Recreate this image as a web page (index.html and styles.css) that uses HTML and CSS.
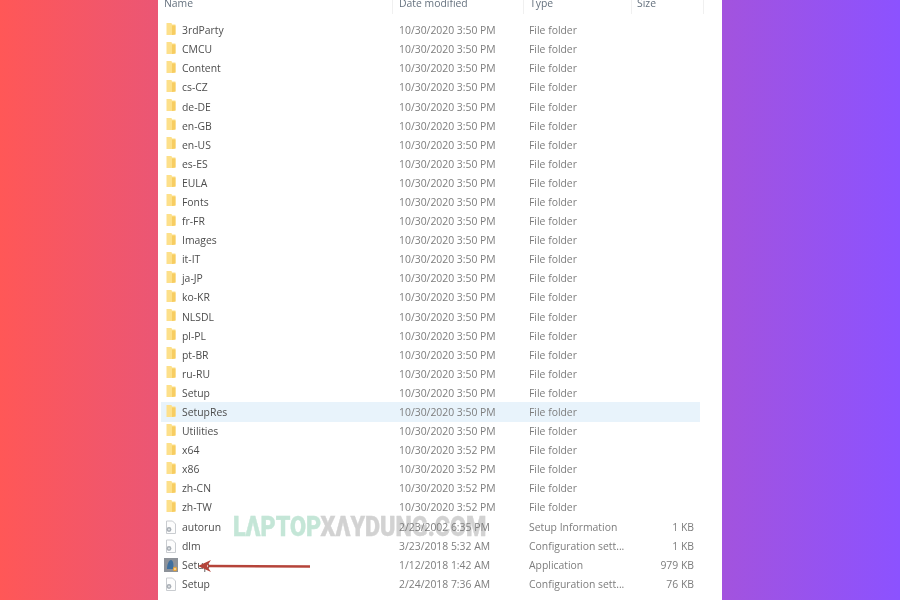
FILE: index.html
```html
<!DOCTYPE html>
<html>
<head>
    <link rel="stylesheet" href="styles.css">
</head>
<body>
    <svg class="defs" width="0" height="0">
        <symbol id="folder" viewBox="0 0 10 14">
            <path d="M.5 1h5l.5 1.500h3.500v10L6 13H.5z" fill="#fde08a"/>
            <path d="M6 3.500h3.500v9L6 13z" fill="#f7cd62"/>
        </symbol>
        <symbol id="file" viewBox="0 0 12 14">
            <path d="M1.500 1h6l3 3v9.500h-9z" fill="#fdfdfd" stroke="#c9ccd0"/>
            <circle cx="4" cy="9.500" r="2.400" fill="#a9afb6"/>
            <circle cx="4" cy="9.500" r=".9" fill="#e8eaec"/>
        </symbol>
        <symbol id="app" viewBox="0 0 14 14">
            <rect width="14" height="14" fill="#8d9299"/>
            <path d="M3 11C3 6 5 2 7 2s3 4 2 9z" fill="#3f6f9e"/>
            <circle cx="11" cy="11" r="2.200" fill="#e9a437"/>
            <circle cx="11" cy="11" r=".8" fill="#fff"/>
        </symbol>
    </svg>

    <div class="window">
        <div class="header">
            <span class="col-name">Name</span>
            <span class="col-date">Date modified</span>
            <span class="col-type">Type</span>
            <span class="col-size">Size</span>
        </div>
        <div class="list">
            <div class="row"><span class="name"><svg class="ico folder"><use href="#folder"/></svg>3rdParty</span><span class="date">10/30/2020 3:50 PM</span><span>File folder</span><span></span></div>
            <div class="row"><span class="name"><svg class="ico folder"><use href="#folder"/></svg>CMCU</span><span class="date">10/30/2020 3:50 PM</span><span>File folder</span><span></span></div>
            <div class="row"><span class="name"><svg class="ico folder"><use href="#folder"/></svg>Content</span><span class="date">10/30/2020 3:50 PM</span><span>File folder</span><span></span></div>
            <div class="row"><span class="name"><svg class="ico folder"><use href="#folder"/></svg>cs-CZ</span><span class="date">10/30/2020 3:50 PM</span><span>File folder</span><span></span></div>
            <div class="row"><span class="name"><svg class="ico folder"><use href="#folder"/></svg>de-DE</span><span class="date">10/30/2020 3:50 PM</span><span>File folder</span><span></span></div>
            <div class="row"><span class="name"><svg class="ico folder"><use href="#folder"/></svg>en-GB</span><span class="date">10/30/2020 3:50 PM</span><span>File folder</span><span></span></div>
            <div class="row"><span class="name"><svg class="ico folder"><use href="#folder"/></svg>en-US</span><span class="date">10/30/2020 3:50 PM</span><span>File folder</span><span></span></div>
            <div class="row"><span class="name"><svg class="ico folder"><use href="#folder"/></svg>es-ES</span><span class="date">10/30/2020 3:50 PM</span><span>File folder</span><span></span></div>
            <div class="row"><span class="name"><svg class="ico folder"><use href="#folder"/></svg>EULA</span><span class="date">10/30/2020 3:50 PM</span><span>File folder</span><span></span></div>
            <div class="row"><span class="name"><svg class="ico folder"><use href="#folder"/></svg>Fonts</span><span class="date">10/30/2020 3:50 PM</span><span>File folder</span><span></span></div>
            <div class="row"><span class="name"><svg class="ico folder"><use href="#folder"/></svg>fr-FR</span><span class="date">10/30/2020 3:50 PM</span><span>File folder</span><span></span></div>
            <div class="row"><span class="name"><svg class="ico folder"><use href="#folder"/></svg>Images</span><span class="date">10/30/2020 3:50 PM</span><span>File folder</span><span></span></div>
            <div class="row"><span class="name"><svg class="ico folder"><use href="#folder"/></svg>it-IT</span><span class="date">10/30/2020 3:50 PM</span><span>File folder</span><span></span></div>
            <div class="row"><span class="name"><svg class="ico folder"><use href="#folder"/></svg>ja-JP</span><span class="date">10/30/2020 3:50 PM</span><span>File folder</span><span></span></div>
            <div class="row"><span class="name"><svg class="ico folder"><use href="#folder"/></svg>ko-KR</span><span class="date">10/30/2020 3:50 PM</span><span>File folder</span><span></span></div>
            <div class="row"><span class="name"><svg class="ico folder"><use href="#folder"/></svg>NLSDL</span><span class="date">10/30/2020 3:50 PM</span><span>File folder</span><span></span></div>
            <div class="row"><span class="name"><svg class="ico folder"><use href="#folder"/></svg>pl-PL</span><span class="date">10/30/2020 3:50 PM</span><span>File folder</span><span></span></div>
            <div class="row"><span class="name"><svg class="ico folder"><use href="#folder"/></svg>pt-BR</span><span class="date">10/30/2020 3:50 PM</span><span>File folder</span><span></span></div>
            <div class="row"><span class="name"><svg class="ico folder"><use href="#folder"/></svg>ru-RU</span><span class="date">10/30/2020 3:50 PM</span><span>File folder</span><span></span></div>
            <div class="row"><span class="name"><svg class="ico folder"><use href="#folder"/></svg>Setup</span><span class="date">10/30/2020 3:50 PM</span><span>File folder</span><span></span></div>
            <div class="row hover"><span class="name"><svg class="ico folder"><use href="#folder"/></svg>SetupRes</span><span class="date">10/30/2020 3:50 PM</span><span>File folder</span><span></span></div>
            <div class="row"><span class="name"><svg class="ico folder"><use href="#folder"/></svg>Utilities</span><span class="date">10/30/2020 3:50 PM</span><span>File folder</span><span></span></div>
            <div class="row"><span class="name"><svg class="ico folder"><use href="#folder"/></svg>x64</span><span class="date">10/30/2020 3:52 PM</span><span>File folder</span><span></span></div>
            <div class="row"><span class="name"><svg class="ico folder"><use href="#folder"/></svg>x86</span><span class="date">10/30/2020 3:52 PM</span><span>File folder</span><span></span></div>
            <div class="row"><span class="name"><svg class="ico folder"><use href="#folder"/></svg>zh-CN</span><span class="date">10/30/2020 3:52 PM</span><span>File folder</span><span></span></div>
            <div class="row"><span class="name"><svg class="ico folder"><use href="#folder"/></svg>zh-TW</span><span class="date">10/30/2020 3:52 PM</span><span>File folder</span><span></span></div>
            <div class="row"><span class="name"><svg class="ico"><use href="#file"/></svg>autorun</span><span class="date">2/23/2002 6:35 PM</span><span>Setup Information</span><span class="size">1 KB</span></div>
            <div class="row"><span class="name"><svg class="ico"><use href="#file"/></svg>dlm</span><span class="date">3/23/2018 5:32 AM</span><span>Configuration sett...</span><span class="size">1 KB</span></div>
            <div class="row"><span class="name"><svg class="ico"><use href="#app"/></svg>Setup</span><span class="date">1/12/2018 1:42 AM</span><span>Application</span><span class="size">979 KB</span></div>
            <div class="row"><span class="name"><svg class="ico"><use href="#file"/></svg>Setup</span><span class="date">2/24/2018 7:36 AM</span><span>Configuration sett...</span><span class="size">76 KB</span></div>
        </div>

        <div class="watermark"><span class="wm-green">LΛPTOP</span><span class="wm-grey">XΛYDUNG.COM</span></div>

        <svg class="arrow" width="116" height="14" viewBox="0 0 116 14">
            <path d="M112 7.500L10 7" stroke="#b5443a" stroke-width="2.500" fill="none"/>
            <path d="M0 7L13 1L9 7L13 13z" fill="#b5443a"/>
        </svg>
    </div>
</body>
</html>
```

FILE: styles.css
```css
body
{
    margin: 0;
    height: 100vh;
    overflow: hidden;
    background: linear-gradient(90deg, #ff5757, #8c52ff);
    font-family: "Open Sans", "Noto Sans", sans-serif;
    font-size: 10.400px;
}
.defs
{
    display: block;
    height: 0;
}
.window
{
    position: relative;
    width: 564px;
    height: 100vh;
    margin-left: 158px;
    background-color: white;
    color: #5c5c5c;
    overflow: hidden;
    filter: blur(0.35px);
}
.header
{
    display: grid;
    grid-template-columns: 235px 131px 108px 72px;
    height: 14px;
    line-height: 7px;
    color: #66727f;
}
.header span
{
    padding-left: 6px;
    border-right: 1px solid #f0f0f0;
}
.header .col-size
{
    padding-left: 5px;
}
/* list sits above the watermark so the dates stay readable */
.list
{
    position: relative;
    z-index: 1;
    margin: 6.600px 0 0 3px;
    width: 539px;
}
.row
{
    display: grid;
    grid-template-columns: 238px 130px 108px 57px;
    align-items: center;
    height: 19.103px;
}
.row.hover
{
    background-color: #e8f3fb;
}
.name
{
    display: flex;
    align-items: center;
    gap: 4px;
    padding-left: 3px;
    color: #4d4d4d;
}
.ico
{
    width: 14px;
    height: 14px;
}
.ico.folder
{
    margin-bottom: 3px;
}
.date, .row span:nth-child(3)
{
    color: #7d7d7d;
}
.size
{
    text-align: right;
    color: #7d7d7d;
}
.watermark
{
    position: absolute;
    left: 75px;
    top: 511px;
    font-family: "Roboto", sans-serif;
    font-weight: 900;
    font-size: 28px;
    line-height: 32px;
    white-space: nowrap;
    -webkit-text-stroke: 0.400px;
    transform: scaleX(0.830);
    transform-origin: left center;
}
.wm-green
{
    color: #c4e6d7;
}
.wm-grey
{
    color: #d2d2d2;
}
.arrow
{
    position: absolute;
    z-index: 2;
    left: 40px;
    top: 559px;
}
```
